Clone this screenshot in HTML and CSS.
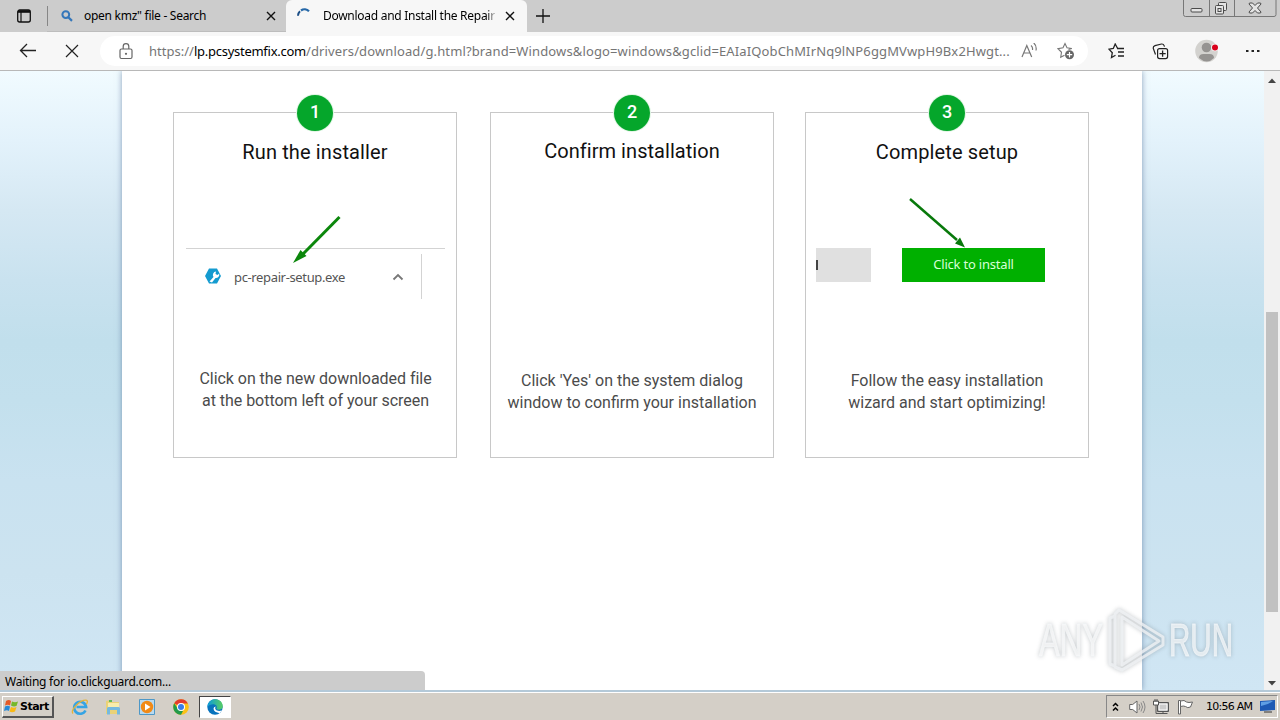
FILE: index.html
```html
<!DOCTYPE html>
<html lang="en">
<head>
<meta charset="utf-8">
<title>Download and Install the Repair Utility</title>
<link rel="stylesheet" href="styles.css">
</head>
<body>
<div class="desktop">
  <header class="tabs">
    <svg class="tab-menu" width="16" height="16" viewBox="0 0 16 16"><rect x="1.700" y="2" width="12.600" height="12" rx="2" fill="none" stroke="#111" stroke-width="1.300"/><path d="M2 3.500h12" stroke="#111" stroke-width="2.600"/><path d="M5 4v10" stroke="#111" stroke-width="1.200"/></svg>
    <div class="tab tab-idle">
      <svg class="fav" width="12" height="12" viewBox="0 0 12 12"><circle cx="4.8" cy="4.6" r="3.4" fill="none" stroke="#3577ba" stroke-width="2"/><path d="M7.3 7.2l3.7 3.7" stroke="#3577ba" stroke-width="2.2"/></svg>
      <span class="tab-title t1">open kmz" file - Search</span>
      <svg class="close" width="10" height="10" viewBox="0 0 10 10"><path d="M1 1l8 8M9 1l-8 8" stroke="#111" stroke-width="1.4"/></svg>
    </div>
    <div class="tab tab-active">
      <svg class="spin" width="14" height="14" viewBox="0 0 14 14"><path d="M1 7.800A6.200 6.200 0 0 1 3 3.200" fill="none" stroke="#1c4e86" stroke-width="2"/><path d="M4 2.500A6.200 6.200 0 0 1 12 3.200" fill="none" stroke="#2668a8" stroke-width="2.200"/></svg>
      <span class="tab-title t2">Download and Install the Repair U</span>
      <svg class="close" width="10" height="10" viewBox="0 0 10 10"><path d="M1 1l8 8M9 1l-8 8" stroke="#111" stroke-width="1.4"/></svg>
    </div>
    <svg class="plus" width="14" height="14" viewBox="0 0 14 14"><path d="M7 0v14M0 7h14" stroke="#111" stroke-width="1.3"/></svg>
    <svg class="wincontrols" width="94" height="18" viewBox="0 0 94 18"><path d="M.5 0v14.500q0 2 2 2h88.500q2 0 2-2V0M26.500 0v16M51.500 0v16" fill="none" stroke="#777"/><g fill="#e4e4e4" stroke="#4b4b4b"><rect x="8" y="8.500" width="11" height="3.500" rx="1"/><rect x="35.500" y="2.500" width="8" height="8" rx="1"/><rect x="32.500" y="5.500" width="8" height="8.500" rx="1"/><rect x="35" y="8.500" width="3" height="3"/><path d="M66.500 3h3l2.500 2.500L74.500 3h3l.5 1-3.500 4 3.500 4-.5 1h-3L72 10.500 69.500 13h-3l-.5-1 3.500-4L66 4z"/></g></svg>
  </header>
  <div class="toolbar">
    <svg class="back" width="18" height="16" viewBox="0 0 18 16"><path d="M17 7.500H1.500M8 1L1.500 7.500 8 14" fill="none" stroke="#222" stroke-width="1.3"/></svg>
    <svg class="stop" width="14" height="14" viewBox="0 0 14 14"><path d="M1 1l12 12M13 1L1 13" stroke="#222" stroke-width="1.2"/></svg>
    <div class="address">
      <svg class="lock" width="14" height="17" viewBox="0 0 14 17"><rect x="1" y="6" width="12" height="9.500" rx="1.500" fill="none" stroke="#666" stroke-width="1.2"/><path d="M4.200 6V3.500a2.800 2.800 0 0 1 5.600 0V6" fill="none" stroke="#666" stroke-width="1.2"/><circle cx="7" cy="10.800" r="1.100" fill="#666"/></svg>
      <span class="url"><span class="u1">https://</span><b class="u2">lp.pcsystemfix.com</b><span class="u3">/drivers/download/g.html?brand=Windows&amp;logo=windows&amp;gclid=EAIaIQobChMIrNq9lNP6ggMVwpH9Bx2Hwgt...</span></span>
      <svg class="read" width="18" height="17" viewBox="0 0 18 17"><path d="M1 14L5.800 2.500 10.700 14M2.700 10h6.300M10 2.500q2 1.500 1.500 4.500M12.700 0q3.200 2.500 2.300 7.500" fill="none" stroke="#777" stroke-width="1.2"/></svg>
      <svg class="addfav" width="18" height="18" viewBox="0 0 18 18"><path d="M11.500 7.600L14.800 6.500 10 5.800 8 1.500 6 5.800 1 6.700l3.500 3.600-.8 5L7.500 13.200" fill="none" stroke="#777" stroke-width="1.100"/><circle cx="12.500" cy="12.700" r="4.500" fill="#666"/><path d="M12.500 10v5.400M9.800 12.700h5.400" stroke="#fff" stroke-width="1.200"/></svg>
    </div>
    <svg class="favs" width="17" height="16" viewBox="0 0 17 16"><path d="M9.500 5.300L7.200 1 5.300 5.500 1 6.200l3.300 3.500-.8 4.800 4-2.300" fill="none" stroke="#222" stroke-width="1.3"/><path d="M9 5.500h7M10 9h6M10 13h6" stroke="#222" stroke-width="1.3"/></svg>
    <svg class="coll" width="17" height="17" viewBox="0 0 17 17"><path d="M3.500 11.500L1.200 5.200Q1 3.200 3 2.600L9.500 1q2-.2 2.600 1.600l.4 1" fill="none" stroke="#222" stroke-width="1.200"/><rect x="5.600" y="5.600" width="10" height="10" rx="2" fill="none" stroke="#222" stroke-width="1.200"/><path d="M10.600 7.500v6.200M7.500 10.600h6.200" stroke="#222" stroke-width="1.300"/></svg>
    <svg class="profile" width="24" height="24" viewBox="0 0 24 24"><circle cx="11.500" cy="12" r="11.300" fill="#d3d2cf"/><circle cx="11.500" cy="8.500" r="4.800" fill="#959391"/><path d="M4 19q0-4 4.500-4h6q4.500 0 4.500 4-7 7-15 0" fill="#959391"/><circle cx="20" cy="8.500" r="3.800" fill="#f7f7f7"/><circle cx="20" cy="8.500" r="3" fill="#d9001b"/></svg>
    <svg class="more" width="14" height="4" viewBox="0 0 14 4"><path d="M0 1h2.500v2H0zM5.500 1H8v2H5.500zM11 1h2.500v2H11z" fill="#222"/></svg>
  </div>
  <main class="viewport">
    <div class="site">
      <div class="sheet">
        <section class="card c1">
          <div class="num">1</div>
          <h2>Run the installer</h2>
          <svg class="art" width="282" height="190" viewBox="0 0 282 190"><path d="M12 78.500h259M247.500 84v45" stroke="#d3d3d3"/><path d="M165.500 47L129 84" stroke="#0b870b" stroke-width="3"/><path d="M119 93l7.500-13 6 6z" fill="#0b870b"/><path d="M35 98.500h8l4 7.500-4 7.500h-8l-4-7.500z" fill="#149bd0"/><path d="M35.500 111.500l4-4.500a3.500 3.500 0 0 1 2.500-5.500l-.5 2.500 2 1 1.700-1.500a3.500 3.500 0 0 1-3.700 4.500L38 112.500z" fill="#fff"/><path d="M219.500 109.500l4.500-4.500 4.500 4.500" fill="none" stroke="#777" stroke-width="1.800"/></svg>
          <div class="filename">pc-repair-setup.exe</div>
          <p>Click on the new downloaded file<br>at the bottom left of your screen</p>
        </section>
        <section class="card c2">
          <div class="num">2</div>
          <h2>Confirm installation</h2>
          <p>Click 'Yes' on the system dialog<br>window to confirm your installation</p>
        </section>
        <section class="card c3">
          <div class="num">3</div>
          <h2>Complete setup</h2>
          <svg class="art" width="282" height="190" viewBox="0 0 282 190"><path d="M10 78h55v34H10z" fill="#e0e0e0"/><path d="M10 90h2v10h-2z" fill="#444"/><path d="M96 78h143v34H96z" fill="#00b000"/><path d="M104 29l47 41" stroke="#08790b" stroke-width="2.500"/><path d="M159 77.500l-10-4 5-6z" fill="#08790b"/></svg>
          <div class="install">Click to install</div>
          <p>Follow the easy installation<br>wizard and start optimizing!</p>
        </section>
      </div>
    </div>
    <div class="scroll">
      <svg class="up" width="8" height="5" viewBox="0 0 8 5"><path d="M0 5l4-4.500L8 5z" fill="#444"/></svg>
      <div class="thumb"></div>
      <svg class="down" width="8" height="5" viewBox="0 0 8 5"><path d="M0 0h8L4 4.500z" fill="#444"/></svg>
    </div>
    <div class="status"><span>Waiting for io.clickguard.com...</span></div>
    <svg class="watermark" width="210" height="72" viewBox="0 0 210 72">
      <g class="wm-text"><text x="8" y="52" textLength="64" lengthAdjust="spacingAndGlyphs">ANY</text><text x="138" y="52" textLength="64" lengthAdjust="spacingAndGlyphs">RUN</text></g>
      <g class="wm-logo"><path d="M84 12l-5 2v46l5 2M91 13v48l37-24zM84 10l4-4 44 27v8L91 66l-7-3z"/></g>
    </svg>
  </main>
  <footer class="taskbar">
    <div class="start"><svg width="15" height="14" viewBox="0 0 15 14"><path d="M2 2q3-2 5 0L6 6.500q-2-1.500-5 0z" fill="#e55a28"/><path d="M8 2.500q3 1.500 6 0l-1.500 4.500q-3 1-5.500-.5z" fill="#76b82a"/><path d="M1 7.500q3-1.500 5 0L5 12q-2-1.500-5 0z" fill="#2789d8"/><path d="M7 8q3 1.500 5.500 0L11 12.500q-3 1.500-5.500 0z" fill="#f9b915"/></svg><span>Start</span></div>
    <svg class="ie" width="18" height="18" viewBox="0 0 18 18"><path d="M14.500 12.500a6 6 0 1 1 .6-3.500H5.500" fill="none" stroke="#35a4e4" stroke-width="2.600"/><path d="M2 15.500C-1 12 9 2 15 2.200q2.500.3.500 4" fill="none" stroke="#e3b33a" stroke-width="1.300"/></svg>
    <svg class="explorer" width="16" height="16" viewBox="0 0 16 16"><path d="M1 2l5-1 1 2h7v12H1z" fill="#ead277"/><path d="M3 4h11v5H3z" fill="#f8edac"/><path d="M4 1h3v2H4z" fill="#61b95a"/><path d="M2 15.500V9.500q0-1.500 1.500-1.500h10Q15 8 15 9.500v6h-3V11H5v4.500z" fill="#75b9df"/></svg>
    <svg class="player" width="16" height="16" viewBox="0 0 16 16"><path d="M.5.5h15v15H.5z" fill="#b9daf0" stroke="#4e98c7"/><circle cx="8" cy="8" r="6.200" fill="#f18a17"/><path d="M6 4.500v7L11.500 8z" fill="#fff"/></svg>
    <svg class="chrome" width="16" height="16" viewBox="0 0 16 16"><circle cx="8" cy="8" r="7.800" fill="#fbc116"/><path d="M8 8L1.200 4.200A7.800 7.800 0 0 1 14.900 4.500H8z" fill="#e33b2e"/><path d="M8 15.800A7.800 7.800 0 0 1 1.200 4.200L5 10l5 2z" fill="#229a4b"/><circle cx="8" cy="8" r="4" fill="#fff"/><circle cx="8" cy="8" r="3" fill="#397de8"/></svg>
    <div class="edge"><svg width="16" height="16" viewBox="0 0 16 16"><defs><linearGradient id="eg"><stop stop-color="#0a9bdc"/><stop offset="1" stop-color="#58ce61"/></linearGradient></defs><circle cx="8" cy="8" r="7.700" fill="#0873bd"/><path d="M.4 8C1-2 15-2 15.700 7q.2 4-5 3.600-2-.4-1-1.600Q10.500 6 7 5.300 2.500 4.800.4 8" fill="url(#eg)"/><path d="M8.800 7.500c-2 3 1.500 5.500 6 4l-2 2.700Q7 13.500 6.500 9.800q0-2 2.300-2.300" fill="#fff"/></svg></div>
    <div class="tray">
      <svg class="chev" width="7" height="10" viewBox="0 0 7 10"><path d="M1 4l2.500-2.500L6 4M1 8.500L3.500 6 6 8.500" fill="none" stroke="#000" stroke-width="1.500"/></svg>
      <svg class="sound" width="17" height="14" viewBox="0 0 17 14"><path d="M.7 4.500h3L8 1v12L3.700 9.500h-3z" fill="#fff" stroke="#666"/><path d="M10 4q2 3 0 6M12 2.500q3 4.500 0 9M14 1q4 6 0 12" fill="none" stroke="#888"/></svg>
      <svg class="net" width="16" height="16" viewBox="0 0 16 16"><path d="M4.500 3.500h11v9h-11z" fill="#aaa" stroke="#555"/><path d="M6 5h8v6H6z" fill="#ccc" stroke="#fff"/><path d="M.5 2v4h5V2z" fill="#fff" stroke="#555"/><path d="M2 0v3M4 0v3M3 6v8.500h11.500M10 12v2" fill="none" stroke="#555"/></svg>
      <svg class="flag" width="17" height="16" viewBox="0 0 17 16"><path d="M1.500 15V1.500h2V15z" fill="#fff" stroke="#666"/><path d="M3.500 2q4-1.500 6 1 2 1 6 0l-2 5q-3 1.500-5-.5-2-1-5 0z" fill="#fff" stroke="#666"/></svg>
      <span class="clock">10:56 AM</span>
      <svg class="show" width="15" height="13" viewBox="0 0 15 13"><path d="M0 1l15-1v10l-15 1z" fill="#1d59b4"/><path d="M1 2l12-1Q8 5 1 6z" fill="#5e9ee4"/><path d="M4 12h8" stroke="#333"/></svg>
    </div>
  </footer>
</div>
</body>
</html>
```
FILE: styles.css
```css
* { box-sizing: border-box; }
body { margin: 0; overflow: hidden; font-family: "Noto Sans", "Open Sans", sans-serif; color: #111; }
svg { display: block; flex: none; }
.desktop { width: 1280px; height: 720px; display: flex; flex-direction: column; overflow: hidden; }

.tabs { height: 32px; background: #ccc; display: flex; flex: none; }
.tab-menu { margin: 8px 0 0 16px; }
.tab { display: flex; height: 32px; font-size: 12px; line-height: 32px; white-space: nowrap; }
.tab-idle { width: 239px; margin-left: 15px; padding-left: 13px; border-bottom: 1px solid #bdbdbd; }
.tab-idle::before { content: ""; width: 1px; height: 20px; background: #868686; margin: 6px 0 0 -13px; }
.fav { margin: 10px 11px 0 13px; }
.tab-title { overflow: hidden; flex: none; color: #000; }
.t1 { width: 182px; letter-spacing: -.27px; }
.close { margin-top: 11px; }
.tab-active { width: 241px; background: #f7f7f7; border-radius: 6px 6px 0 0; padding-left: 11px; }
.spin { margin: 8px 12px 0 0; }
.t2 { width: 173px; letter-spacing: -.28px; mask-image: linear-gradient(90deg, #000 164px, transparent 174px); }
.tab-active .close { margin-left: 9px; }
.plus { margin: 9px 0 0 9px; }
.wincontrols { margin-left: auto; margin-right: 3px; }

.toolbar { height: 39px; background: #f7f7f7; border-bottom: 1px solid #b8b8b8; display: flex; align-items: center; flex: none; }
.back { margin-left: 19px; }
.stop { margin-left: 28px; }
.address { width: 988px; height: 30px; margin-left: 21px; border-radius: 15px; background: #fff; display: flex; align-items: center; padding-left: 19px; }
.lock { margin-right: 16px; }
.url { width: 862px; font-size: 13px; color: #757575; white-space: nowrap; line-height: 30px; }
.url span, .url b { display: inline-block; }
.u1 { width: 45px; }
.u2 { width: 112px; font-weight: 400; color: #000; letter-spacing: -.27px; }
.u3 { letter-spacing: .13px; }
.read { margin-left: 10px; }
.addfav { margin-left: 18px; }
.favs { margin-left: 20px; }
.coll { margin-left: 27px; }
.profile { margin-left: 26px; }
.more { margin-left: 27px; }

.viewport { height: 621px; flex: none; display: flex; position: relative; overflow: hidden; border-bottom: 2px solid #b4c9d8; }
.site { width: 1264px; padding-left: 122px; background: linear-gradient(#f1fbff 0, #e3f2fb 70px, #d5e8f3 140px, #c9e2ef 210px, #c1dfec 270px, #c3e0ed 330px, #c9e2f0 410px, #cce3f0 500px, #d0e6f4 621px); }
.sheet { width: 1020px; height: 619px; background: #fff; box-shadow: 0 0 6px rgba(70, 100, 140, .6); display: flex; align-items: flex-start; padding: 41px 0 0 51px; }
.card { width: 284px; height: 346px; border: 1px solid #c8c8c8; text-align: center; font-family: Roboto, sans-serif; display: grid; grid-template-rows: 63px 192px auto; flex: none; }
.card > * { grid-column: 1; }
.c2 { margin-left: 33px; }
.c3 { margin-left: 31px; }
.num { grid-row: 1; width: 36px; height: 36px; margin: -18px auto 0; background: #05a62b; border-radius: 50%; color: #fff; font: 500 18px/34px Roboto, sans-serif; box-shadow: 0 0 0 1px #e0f5e4; }
.card h2 { grid-row: 1; margin: 25px 0 0; font-size: 20px; font-weight: 400; line-height: 28px; letter-spacing: .13px; color: #111; }
.c2 h2 { margin-top: 24px; letter-spacing: .05px; }
.art { grid-row: 2; margin-top: -6px; }
.filename { grid-row: 2; justify-self: start; margin: 91px 0 0 60px; font: 13px/20px "Noto Sans", sans-serif; letter-spacing: -.36px; color: #555; }
.install { grid-row: 2; justify-self: start; width: 143px; margin: 78px 0 0 96px; font: 13px/20px "Noto Sans", sans-serif; letter-spacing: -.2px; color: #d8ffd8; }
.card p { grid-row: 3; margin: 0; font-size: 16px; line-height: 22px; color: #4b4b4b; white-space: nowrap; }
.c1 p { letter-spacing: -.04px; padding-left: 1px; }
.c2 p, .c3 p { margin-top: 2px; }

.scroll { width: 16px; background: #f1f1f1; display: flex; flex-direction: column; align-items: center; }
.up { margin-top: 7px; }
.thumb { width: 12px; height: 300px; background: #c1c1c1; margin-top: 229px; }
.down { margin-top: 69px; }
.status { position: absolute; left: 0; bottom: -2px; width: 425px; height: 21px; background: #ccc; border-top-right-radius: 4px; font-size: 12px; line-height: 22px; letter-spacing: -.25px; padding-left: 5px; color: #000; }
.watermark { position: absolute; left: 1031px; top: 533px; overflow: visible; filter: drop-shadow(0 0 2px rgba(80, 90, 100, .45)); }
.wm-text { font: 46px "Liberation Sans", sans-serif; fill: rgba(255, 255, 255, .65); stroke: rgba(245, 248, 250, .7); }
.wm-logo { fill: none; stroke: rgba(240, 243, 245, .8); stroke-width: 3; stroke-linejoin: round; }

.taskbar { height: 28px; flex: none; background: #d4cfc7; border-top: 1px solid #fff; display: flex; align-items: center; font-family: "DejaVu Sans", sans-serif; }
.start { width: 52px; height: 22px; margin-left: 2px; border: 1px solid #fff; border-right: 2px solid #555; border-bottom: 2px solid #555; display: flex; align-items: center; font: bold 11px "DejaVu Sans", sans-serif; color: #000; padding-left: 1px; gap: 1px; }
.start span { letter-spacing: -.5px; }
.ie { margin-left: 17px; }
.explorer { margin-left: 16px; }
.player { margin-left: 18px; }
.chrome { margin-left: 18px; }
.edge { width: 32px; height: 22px; margin-left: 10px; background: #fff; border: 1px solid #444; border-right-color: #fff; border-bottom-color: #fff; padding: 2px 7px; }
.tray { width: 172px; height: 23px; margin: 0 2px 0 auto; border: 1px solid #888; border-right-color: #fff; border-bottom-color: #fff; display: flex; align-items: center; }
.chev { margin-left: 5px; }
.sound { margin-left: 10px; }
.net { margin-left: 7px; }
.flag { margin-left: 8px; }
.clock { width: 48px; margin-left: 12px; font: 11px "DejaVu Sans", sans-serif; letter-spacing: -.75px; white-space: nowrap; color: #000; }
.show { margin-left: 6px; }
```
